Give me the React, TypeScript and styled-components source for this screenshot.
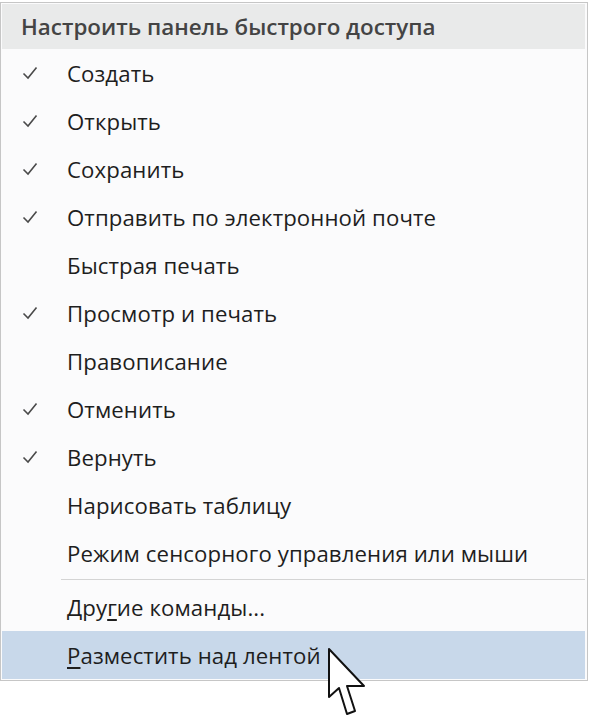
import styled, { createGlobalStyle } from "styled-components";

const GlobalStyle = createGlobalStyle`
  body {
    margin: 0;
    background: #ffffff;
    font-family: "Open Sans", "Noto Sans", sans-serif;
  }
`;

const Page = styled.div`
  position: relative;
  width: 590px;
  height: 718px;
  padding-top: 2px;
  box-sizing: border-box;
`;

const Menu = styled.div`
  width: 588px;
  box-sizing: border-box;
  border: 1px solid #c6c6c6;
  background: #fbfbfc;
  padding: 1px 2px 1px 1px;
`;

const Header = styled.div`
  height: 45px;
  display: flex;
  align-items: center;
  padding-left: 19px;
  background: #e9eaea;
  color: #444;
  font-size: 22.4px;
  font-weight: 600;
`;

const Item = styled.div<{ $active?: boolean }>`
  height: 48px;
  display: flex;
  align-items: center;
  background: ${(p) => (p.$active ? "#c8d8ea" : "transparent")};
  color: #1e1e1e;
  font-size: 22.2px;
  letter-spacing: 0.1px;
`;

const CheckCell = styled.div`
  width: 65px;
  display: flex;
  justify-content: center;
  padding-right: 9px;
  box-sizing: border-box;
  color: #444;
`;

const Label = styled.span`
  white-space: nowrap;
`;

const Key = styled.span`
  text-decoration: underline;
  text-underline-offset: 3px;
`;

const Separator = styled.div`
  height: 1px;
  margin: 2px 0 3px 59px;
  background: #d4d4d4;
`;

const Cursor = styled.svg`
  position: absolute;
  left: 327px;
  top: 647px;
`;

const Check = () => (
  <svg width="16" height="14" viewBox="0 0 16 14">
    <path d="M1.5 7.5 L6 12 L14.5 1.5" fill="none" stroke="#4a4a4a" strokeWidth="1.6" />
  </svg>
);

const items: { label: React.ReactNode; checked: boolean }[] = [
  { label: "Создать", checked: true },
  { label: "Открыть", checked: true },
  { label: "Сохранить", checked: true },
  { label: "Отправить по электронной почте", checked: true },
  { label: "Быстрая печать", checked: false },
  { label: "Просмотр и печать", checked: true },
  { label: "Правописание", checked: false },
  { label: "Отменить", checked: true },
  { label: "Вернуть", checked: true },
  { label: "Нарисовать таблицу", checked: false },
  { label: "Режим сенсорного управления или мыши", checked: false },
];

export default function App() {
  return (
    <Page>
      <GlobalStyle />
      <Menu>
        <Header>Настроить панель быстрого доступа</Header>
        {items.map((it, i) => (
          <Item key={i}>
            <CheckCell>{it.checked && <Check />}</CheckCell>
            <Label>{it.label}</Label>
          </Item>
        ))}
        <Separator />
        <Item>
          <CheckCell />
          <Label>
            Дру<Key>г</Key>ие команды...
          </Label>
        </Item>
        <Item $active>
          <CheckCell />
          <Label>
            <Key>Р</Key>азместить над лентой
          </Label>
        </Item>
      </Menu>
      <Cursor width="42" height="72" viewBox="0 0 42 72">
        <path
          d="M2 2 L2 50 L12 41 L20 67 L28 64 L20 39 L37 39 Z"
          fill="#ffffff"
          stroke="#111"
          strokeWidth="2"
          strokeLinejoin="round"
        />
      </Cursor>
    </Page>
  );
}
